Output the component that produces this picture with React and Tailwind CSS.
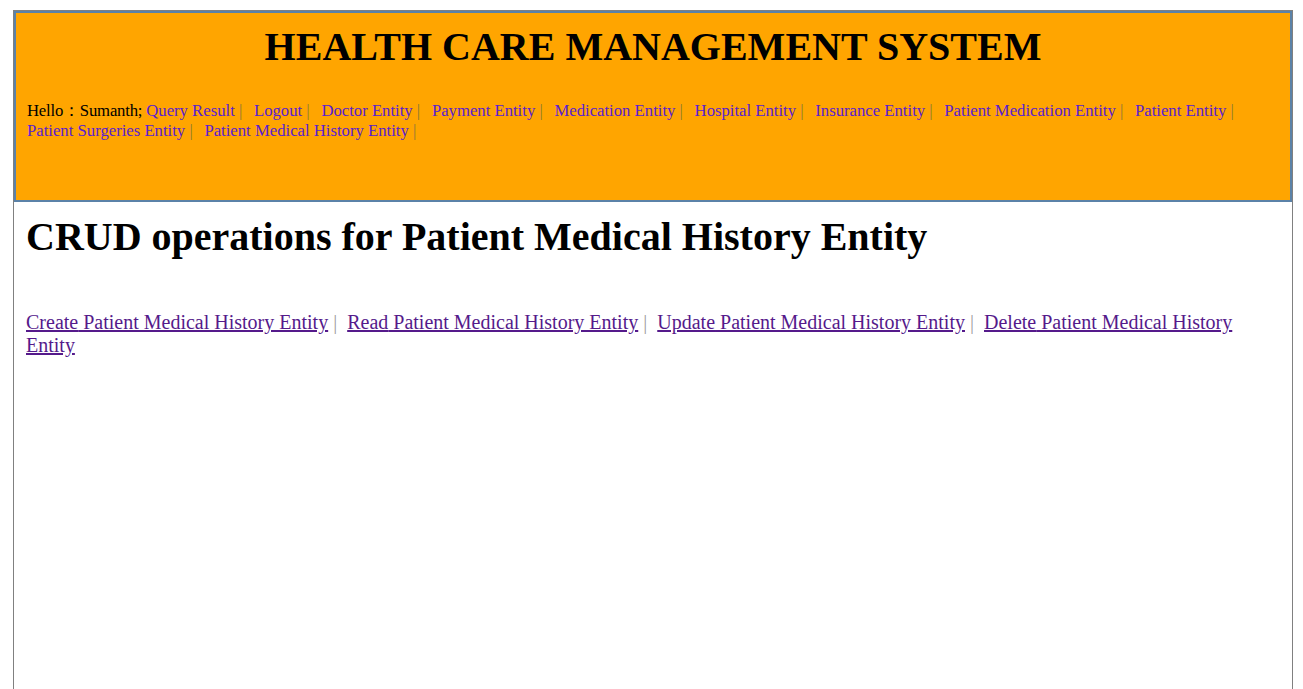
export default function App() {
  const nav = [
    "Query Result",
    "Logout",
    "Doctor Entity",
    "Payment Entity",
    "Medication Entity",
    "Hospital Entity",
    "Insurance Entity",
    "Patient Medication Entity",
    "Patient Entity",
    "Patient Surgeries Entity",
    "Patient Medical History Entity",
  ];
  const crud = ["Create", "Read", "Update", "Delete"];
  return (
    <div className="min-h-[689px] bg-white" style={{ fontFamily: '"Liberation Serif", "Times New Roman", serif' }}>
      <div className="ml-[13px] mr-[10px] mt-[10px] min-h-[679px] border border-b-0 border-[#808080]">
        <div className="h-[191px] border-2 border-[#5b82a8] bg-[#ffa500] px-[11px]">
          <div className="pt-[10px] text-center text-[40px] font-bold leading-[48px] text-black">
            HEALTH CARE MANAGEMENT SYSTEM
          </div>
          <div className="mt-[30px] text-[16.7px] leading-[20px] text-black">
            <span className="tracking-[-0.2px]">Hello：Sumanth;</span>
            <span className="inline-block w-[4px]"></span>
            {nav.map((n) => (
              <span key={n}>
                <a className="text-[#5a1dd0]">{n}</a>
                <span className="text-[#8a7a3a]">{" |"}</span>
                <span className="inline-block w-[7.5px]"></span>{" "}
              </span>
            ))}
          </div>
        </div>
        <div className="px-[12px]">
          <h1 className="mt-[12px] text-[40px] font-bold leading-[46px] text-black">
            CRUD operations for Patient Medical History Entity
          </h1>
          <div className="mt-[51px] text-[20px] leading-[23px]">
            {crud.map((c, i) => (
              <span key={c}>
                <a className="text-[#551a8b] underline">{c} Patient Medical History Entity</a>
                {i < crud.length - 1 && (
                  <span className="text-[#a0a0a0]">{" | "}&nbsp;</span>
                )}
              </span>
            ))}
          </div>
        </div>
      </div>
    </div>
  );
}
